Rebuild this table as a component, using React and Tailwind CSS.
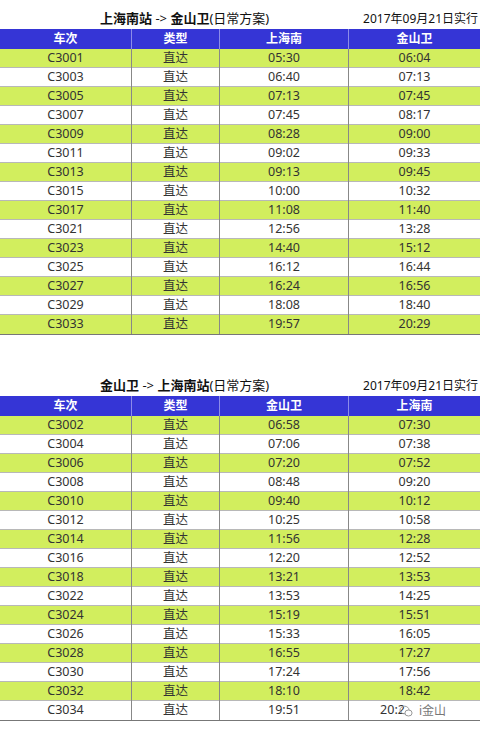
import React from "react";

const top = [
  ["C3001", "05:30", "06:04"],
  ["C3003", "06:40", "07:13"],
  ["C3005", "07:13", "07:45"],
  ["C3007", "07:45", "08:17"],
  ["C3009", "08:28", "09:00"],
  ["C3011", "09:02", "09:33"],
  ["C3013", "09:13", "09:45"],
  ["C3015", "10:00", "10:32"],
  ["C3017", "11:08", "11:40"],
  ["C3021", "12:56", "13:28"],
  ["C3023", "14:40", "15:12"],
  ["C3025", "16:12", "16:44"],
  ["C3027", "16:24", "16:56"],
  ["C3029", "18:08", "18:40"],
  ["C3033", "19:57", "20:29"],
];

const bottom = [
  ["C3002", "06:58", "07:30"],
  ["C3004", "07:06", "07:38"],
  ["C3006", "07:20", "07:52"],
  ["C3008", "08:48", "09:20"],
  ["C3010", "09:40", "10:12"],
  ["C3012", "10:25", "10:58"],
  ["C3014", "11:56", "12:28"],
  ["C3016", "12:20", "12:52"],
  ["C3018", "13:21", "13:53"],
  ["C3022", "13:53", "14:25"],
  ["C3024", "15:19", "15:51"],
  ["C3026", "15:33", "16:05"],
  ["C3028", "16:55", "17:27"],
  ["C3030", "17:24", "17:56"],
  ["C3032", "18:10", "18:42"],
  ["C3034", "19:51", "20:2"],
];

const font = { fontFamily: '"Noto Sans", "Noto Sans CJK SC", sans-serif' };

function Title({ from, to }) {
  return (
    <div className="flex h-[29px] items-end pb-[4px] text-[13px] leading-none text-[#111]">
      <div className="pl-[100px]">
        <span className="font-bold">{from}</span>
        <span> -&gt; </span>
        <span className="font-bold">{to}</span>
        <span>(日常方案)</span>
      </div>
      <div className="ml-auto pr-[2px] text-[12px]">2017年09月21日实行</div>
    </div>
  );
}

function Table({ cols, rows, last }) {
  return (
    <div className="border-b border-[#777]">
      <div className="grid h-[20px] grid-cols-[132px_88px_129px_131px] bg-[#3535d6] text-[12px] font-bold text-white">
        {cols.map((c, i) => (
          <div
            key={i}
            className={`flex items-center justify-center ${i < 3 ? "border-r border-[#8c8ce8]" : ""}`}
          >
            {c}
          </div>
        ))}
      </div>
      {rows.map((r, idx) => {
        const green = idx % 2 === 0;
        const isLast = idx === rows.length - 1;
        return (
          <div
            key={r[0]}
            className={`grid h-[19px] grid-cols-[132px_88px_129px_131px] text-[12.5px] text-[#333] ${green ? "bg-[#d2ee5e]" : "bg-white"} ${isLast ? "" : "border-b border-[#b8b8b8]"}`}
          >
            <div className="flex items-center justify-center border-r border-[#888]">{r[0]}</div>
            <div className="flex items-center justify-center border-r border-[#888]">直达</div>
            <div className="flex items-center justify-center border-r border-[#888]">{r[1]}</div>
            <div className="relative flex items-center justify-center">
              {last && isLast ? (
                <>
                  <span className="pr-[44px]">{r[2]}</span>
                  <span className="absolute left-[50px] top-[1px] flex items-center gap-[6px] text-[12px] text-[#777]">
                    <svg width="14" height="13" viewBox="0 0 14 13">
                      <ellipse cx="5.5" cy="5" rx="4.5" ry="3.8" fill="none" stroke="#999" strokeWidth="1" />
                      <ellipse cx="9.5" cy="8" rx="3.6" ry="3" fill="white" stroke="#999" strokeWidth="1" />
                    </svg>
                    <span>i金山</span>
                  </span>
                </>
              ) : (
                r[2]
              )}
            </div>
          </div>
        );
      })}
    </div>
  );
}

export default function App() {
  return (
    <div className="h-[730px] w-[480px] overflow-hidden bg-white" style={font}>
      <Title from="上海南站" to="金山卫" />
      <Table cols={["车次", "类型", "上海南", "金山卫"]} rows={top} />
      <div className="h-[32px]" />
      <Title from="金山卫" to="上海南站" />
      <Table cols={["车次", "类型", "金山卫", "上海南"]} rows={bottom} last />
    </div>
  );
}
